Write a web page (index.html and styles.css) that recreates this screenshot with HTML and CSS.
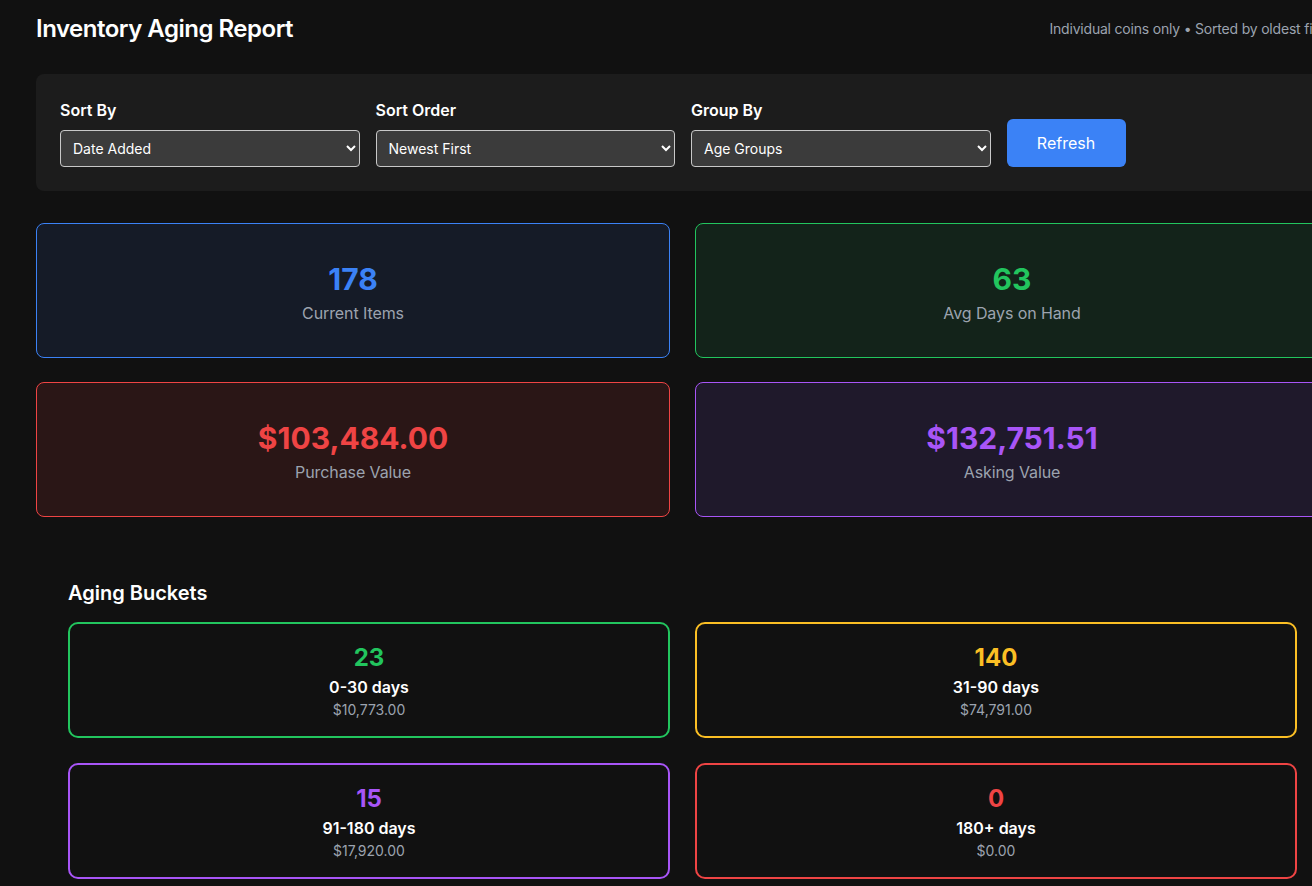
FILE: index.html
```html
<!DOCTYPE html>
<html lang="en">
<head>
<meta charset="utf-8">
<title>Inventory Aging Report</title>
<link rel="stylesheet" href="styles.css">
</head>
<body>
<div class="page">
  <header class="header">
    <h1 class="title">Inventory Aging Report</h1>
    <div class="subtitle">Individual coins only • Sorted by oldest first</div>
  </header>

  <section class="filters">
    <div class="field">
      <label class="field-label">Sort By</label>
      <select class="select">
        <option>Date Added</option>
      </select>
    </div>
    <div class="field">
      <label class="field-label">Sort Order</label>
      <select class="select">
        <option>Newest First</option>
      </select>
    </div>
    <div class="field">
      <label class="field-label">Group By</label>
      <select class="select">
        <option>Age Groups</option>
      </select>
    </div>
    <button class="btn">Refresh</button>
  </section>

  <section class="stats">
    <div class="stat stat-blue">
      <div class="stat-value">178</div>
      <div class="stat-label">Current Items</div>
    </div>
    <div class="stat stat-green">
      <div class="stat-value">63</div>
      <div class="stat-label">Avg Days on Hand</div>
    </div>
    <div class="stat stat-red">
      <div class="stat-value">$103,484.00</div>
      <div class="stat-label">Purchase Value</div>
    </div>
    <div class="stat stat-purple">
      <div class="stat-value">$132,751.51</div>
      <div class="stat-label">Asking Value</div>
    </div>
  </section>

  <section class="buckets-section">
    <h2 class="section-title">Aging Buckets</h2>
    <div class="buckets">
      <div class="bucket bucket-green">
        <div class="bucket-count">23</div>
        <div class="bucket-label">0-30 days</div>
        <div class="bucket-value">$10,773.00</div>
      </div>
      <div class="bucket bucket-yellow">
        <div class="bucket-count">140</div>
        <div class="bucket-label">31-90 days</div>
        <div class="bucket-value">$74,791.00</div>
      </div>
      <div class="bucket bucket-purple">
        <div class="bucket-count">15</div>
        <div class="bucket-label">91-180 days</div>
        <div class="bucket-value">$17,920.00</div>
      </div>
      <div class="bucket bucket-red">
        <div class="bucket-count">0</div>
        <div class="bucket-label">180+ days</div>
        <div class="bucket-value">$0.00</div>
      </div>
    </div>
  </section>
</div>
</body>
</html>
```

FILE: styles.css
```css
html, body {
  margin: 0;
  padding: 0;
  background: #111111;
  overflow: hidden;
}

body {
  font-family: Inter, "Noto Sans", "Liberation Sans", sans-serif;
  color: #ffffff;
}

.page {
  width: 1293px;
  margin-left: 36px;
  padding-top: 13px;
}

.header {
  display: flex;
  justify-content: space-between;
  align-items: center;
  margin-bottom: 29px;
}

.title {
  margin: 0;
  font-size: 24px;
  line-height: 32px;
  font-weight: 600;
  letter-spacing: -0.5px;
  color: #ffffff;
}

.subtitle {
  font-size: 14px;
  line-height: 20px;
  letter-spacing: -0.2px;
  color: #9ca3af;
}

.filters {
  display: flex;
  align-items: flex-end;
  gap: 16px;
  background: #1c1c1c;
  border-radius: 8px;
  padding: 24px;
}

.field {
  display: flex;
  flex-direction: column;
  gap: 8px;
}

.field-label {
  font-size: 16px;
  line-height: 24px;
  font-weight: 600;
  color: #ffffff;
}

.select {
  width: 299.5px;
  height: 37px;
  box-sizing: border-box;
  background: #3b3b3b;
  color: #ffffff;
  border: 1px solid #c8c8c8;
  border-radius: 4px;
  padding: 0 8px;
  font-family: Inter, "Noto Sans", "Liberation Sans", sans-serif;
  font-size: 14px;
}

.btn {
  width: 119px;
  height: 48px;
  background: #3b82f6;
  color: #ffffff;
  border: none;
  border-radius: 6px;
  font-family: Inter, "Noto Sans", "Liberation Sans", sans-serif;
  font-size: 16px;
}

.stats {
  display: grid;
  grid-template-columns: 1fr 1fr;
  column-gap: 25px;
  row-gap: 24px;
  margin-top: 32px;
}

.stat {
  border: 1px solid;
  border-radius: 8px;
  padding: 34px 32px 32px;
  text-align: center;
}

.stat-value {
  font-size: 30px;
  line-height: 43px;
  font-weight: 700;
}

.stat-label {
  font-size: 16px;
  line-height: 24px;
  letter-spacing: -0.1px;
  color: #9ca3af;
}

.stat-blue { background: #151b27; border-color: #3b82f6; }
.stat-blue .stat-value { color: #3b82f6; }
.stat-green { background: #13231a; border-color: #22c55e; }
.stat-green .stat-value { color: #22c55e; }
.stat-red { background: #2a1616; border-color: #ef4444; }
.stat-red .stat-value { color: #ef4444; }
.stat-purple { background: #1f192b; border-color: #a855f7; }
.stat-purple .stat-value { color: #a855f7; }

.buckets-section {
  margin-top: 32px;
  padding: 30px 32px 32px;
}

.section-title {
  margin: 0 0 15px;
  font-size: 20px;
  line-height: 28px;
  font-weight: 600;
}

.buckets {
  display: grid;
  grid-template-columns: 1fr 1fr;
  column-gap: 25px;
  row-gap: 25px;
}

.bucket {
  border: 2px solid;
  border-radius: 10px;
  padding: 17px 16px 16px;
  text-align: center;
}

.bucket-count {
  font-size: 24px;
  line-height: 33px;
  font-weight: 700;
}

.bucket-label {
  margin-top: 1px;
  font-size: 16px;
  line-height: 24px;
  font-weight: 600;
  color: #ffffff;
}

.bucket-value {
  margin-top: 1px;
  font-size: 14px;
  line-height: 20px;
  color: #9ca3af;
}

.bucket-green { border-color: #22c55e; }
.bucket-green .bucket-count { color: #22c55e; }
.bucket-yellow { border-color: #fbbf24; }
.bucket-yellow .bucket-count { color: #fbbf24; }
.bucket-purple { border-color: #a855f7; }
.bucket-purple .bucket-count { color: #a855f7; }
.bucket-red { border-color: #ef4444; }
.bucket-red .bucket-count { color: #ef4444; }
```
